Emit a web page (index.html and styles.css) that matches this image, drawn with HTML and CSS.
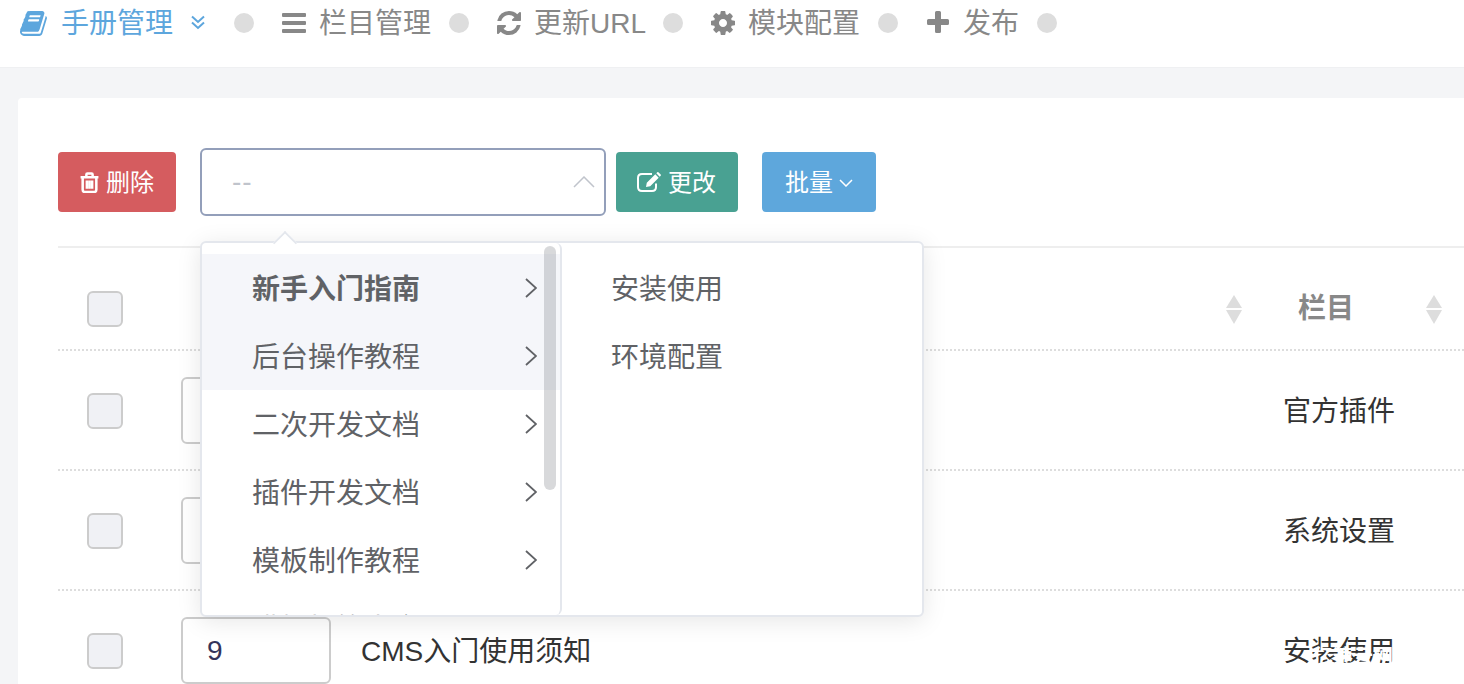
FILE: index.html
```html
<!DOCTYPE html>
<html lang="zh">
<head>
<meta charset="utf-8">
<title>手册管理</title>
<link rel="stylesheet" href="styles.css">
</head>
<body>
<nav class="nav">
  <a class="nav-item active"><svg class="nav-icon book" viewBox="0 0 1792 1792"><path d="M1639 478q40 57 18 129l-275 906q-19 64-76.5 107.5t-122.5 43.5h-923q-77 0-148.5-53.5t-99.5-131.5q-24-67-2-127 0-4 3-27t4-37q1-8-3-21.5t-3-19.5q2-11 8-21t16.5-23.5 16.5-23.5q23-38 45-91.5t30-91.5q3-10 .5-30t-.5-28q3-11 17-28t17-23q21-36 42-92t25-90q1-9-2.5-32t.5-28q4-13 22-30.5t22-22.5q19-26 42.5-84.5t27.5-96.5q1-8-3-25.5t-2-26.5q2-8 9-18t18-23 17-21q8-12 16.5-30.5t15-35 16-36 19.5-32 26.5-23.5 36-11.5 47.5 5.5l-1 3q38-9 51-9h761q74 0 114 56t18 130l-274 906q-36 119-71.5 153.5t-128.5 34.5h-869q-27 0-38 15-11 16-1 43 24 70 144 70h923q29 0 56-15.5t35-41.5l300-987q7-22 5-57 38 15 59 43zm-1064 2q-4 13 2 22.5t20 9.5h608q13 0 25.5-9.5t16.5-22.5l21-64q4-13-2-22.5t-20-9.5h-608q-13 0-25.5 9.5t-16.5 22.5zm-83 256q-4 13 2 22.5t20 9.5h608q13 0 25.5-9.5t16.5-22.5l21-64q4-13-2-22.5t-20-9.5h-608q-13 0-25.5 9.5t-16.5 22.5z"/></svg><span>手册管理</span><svg class="chev-double" viewBox="0 0 16 16"><path d="M2 2.5 8 8l6-5.500M2 8.500 8 14l6-5.500"/></svg></a>
  <i class="dot dot-first"></i>
  <a class="nav-item"><svg class="nav-icon bars" viewBox="0 0 24 20"><rect y="0" width="24" height="4" rx="1"/><rect y="8" width="24" height="4" rx="1"/><rect y="16" width="24" height="4" rx="1"/></svg><span>栏目管理</span></a>
  <i class="dot"></i>
  <a class="nav-item nav-url"><svg class="nav-icon refresh" viewBox="0 0 1792 1792"><path d="M1639 1056q0 5-1 7-64 268-268 434.5t-478 166.5q-146 0-282.5-55t-243.5-157l-129 129q-19 19-45 19t-45-19-19-45v-448q0-26 19-45t45-19h448q26 0 45 19t19 45-19 45l-137 137q71 66 161 102t187 36q134 0 250-65t186-179q11-17 53-117 8-23 30-23h192q13 0 22.5 9.5t9.5 22.5zm25-800v448q0 26-19 45t-45 19h-448q-26 0-45-19t-19-45 19-45l138-138q-148-137-349-137-134 0-250 65t-186 179q-11 17-53 117-8 23-30 23h-199q-13 0-22.5-9.500t-9.500-22.500v-7q65-268 270-434.500t480-166.500q146 0 284 55.500t245 156.500l130-129q19-19 45-19t45 19 19 45z"/></svg><span>更新URL</span></a>
  <i class="dot"></i>
  <a class="nav-item"><svg class="nav-icon cog" viewBox="0 0 1792 1792"><path d="M1152 896q0-106-75-181t-181-75-181 75-75 181 75 181 181 75 181-75 75-181zm512-109v222q0 12-8 23t-20 13l-185 28q-19 54-39 91 35 50 107 138 10 12 10 25t-9 23q-27 37-99 108t-94 71q-12 0-26-9l-138-108q-44 23-91 38-16 136-29 186-7 28-36 28h-222q-14 0-24.500-8.500t-11.500-21.500l-28-184q-49-16-90-37l-141 107q-10 9-25 9-14 0-25-11-126-114-165-168-7-10-7-23 0-12 8-23 15-21 51-66.500t54-70.500q-27-50-41-99l-183-27q-13-2-21-12.500t-8-23.500v-222q0-12 8-23t19-13l186-28q14-46 39-92-40-57-107-138-10-12-10-24 0-10 9-23 26-36 98.500-107.500t94.500-71.500q13 0 26 10l138 107q44-23 91-38 16-136 29-186 7-28 36-28h222q14 0 24.500 8.500t11.500 21.500l28 184q49 16 90 37l142-107q9-9 24-9 13 0 25 10 129 119 165 170 7 8 7 22 0 12-8 23-15 21-51 66.500t-54 70.500q26 50 41 98l183 28q13 2 21 12.500t8 23.500z"/></svg><span>模块配置</span></a>
  <i class="dot"></i>
  <a class="nav-item"><svg class="nav-icon plus" viewBox="0 0 22 22"><path d="M8 1.500a1.500 1.500 0 0 1 1.500-1.500h3a1.500 1.500 0 0 1 1.500 1.500V8h6.500a1.500 1.500 0 0 1 1.500 1.500v3a1.500 1.500 0 0 1-1.500 1.500H14v6.500a1.500 1.500 0 0 1-1.500 1.500h-3A1.500 1.500 0 0 1 8 20.500V14H1.500A1.500 1.500 0 0 1 0 12.500v-3A1.500 1.500 0 0 1 1.500 8H8z"/></svg><span>发布</span></a>
  <i class="dot"></i>
</nav>

<main class="page">
  <section class="card">
    <div class="toolbar">
      <button class="btn btn-del"><svg class="btn-icon trash" viewBox="0 0 20 20"><path class="thin" d="M1.500 5h17M7 4.500V2.500q0-1 1-1h4q1 0 1 1v2M3.500 5v12q0 2 2 2h9q2 0 2-2V5M7.500 8v8M10 8v8M12.500 8v8"/></svg>删除</button>
      <div class="select"><span class="select-value">--</span><svg class="select-arrow" viewBox="0 0 22 12"><path d="M1 11 11 1l10 10"/></svg></div>
      <button class="btn btn-edit"><svg class="btn-icon edit" viewBox="0 0 24 20"><path class="thin" d="M19 11.500V15q0 4-4 4H5q-4 0-4-4V6q0-4 4-4h10"/><path class="solid" d="M9 15l.8-4.200 8.500-8.500 3.400 3.400-8.500 8.500zM19.300 1.300l1-1q.6-.4 1.100 0l2.300 2.300q.4.500 0 1.100l-1 1z"/></svg>更改</button>
      <button class="btn btn-batch">批量<svg class="caret" viewBox="0 0 14 8"><path d="M1 1l6 6 6-6"/></svg></button>
    </div>

    <div class="table">
      <div class="row row-head">
        <div class="cell-check"><span class="check"></span></div>
        <div class="cell-main cell-sort"><span class="sort"></span></div>
        <div class="cell-cat head-cat"><b>栏目</b><span class="sort"></span></div>
      </div>
      <div class="row">
        <div class="cell-check"><span class="check"></span></div>
        <div class="cell-main"><span class="num"></span></div>
        <div class="cell-cat">官方插件</div>
      </div>
      <div class="row">
        <div class="cell-check"><span class="check"></span></div>
        <div class="cell-main"><span class="num"></span></div>
        <div class="cell-cat">系统设置</div>
      </div>
      <div class="row">
        <div class="cell-check"><span class="check"></span></div>
        <div class="cell-main"><span class="num">9</span><span class="title">CMS入门使用须知</span></div>
        <div class="cell-cat">安装使用</div>
      </div>
    </div>

    <div class="dropdown">
      <span class="pop-arrow"></span>
      <ul class="menu menu-left">
        <li class="hover strong">新手入门指南<svg class="next" viewBox="0 0 12 20"><path d="M1 1l10 9-10 9"/></svg></li>
        <li class="hover">后台操作教程<svg class="next" viewBox="0 0 12 20"><path d="M1 1l10 9-10 9"/></svg></li>
        <li>二次开发文档<svg class="next" viewBox="0 0 12 20"><path d="M1 1l10 9-10 9"/></svg></li>
        <li>插件开发文档<svg class="next" viewBox="0 0 12 20"><path d="M1 1l10 9-10 9"/></svg></li>
        <li>模板制作教程<svg class="next" viewBox="0 0 12 20"><path d="M1 1l10 9-10 9"/></svg></li>
        <li>模板标签大全<svg class="next" viewBox="0 0 12 20"><path d="M1 1l10 9-10 9"/></svg></li>
        <span class="scrollbar"></span>
      </ul>
      <ul class="menu menu-right">
        <li>安装使用</li>
        <li>环境配置</li>
      </ul>
    </div>
  </section>
</main>
<span class="watermark">亿速云网</span>
</body>
</html>
```
FILE: styles.css
```css
* { box-sizing: border-box; }
html, body { margin: 0; height: 684px; overflow: hidden; }
body {
  position: relative;
  width: 1464px;
  background: #f4f5f7;
  font-family: "Liberation Sans", "Noto Sans CJK SC", sans-serif;
  font-size: 28px;
  line-height: 40px;
  color: #333;
}
ul { list-style: none; margin: 0; padding: 0; }

.nav {
  display: flex;
  align-items: flex-start;
  height: 68px;
  padding: 3px 0 0 22px;
  background: #fff;
  border-bottom: 1px solid #eff0f2;
  color: #888;
}
.nav-item { display: flex; align-items: center; height: 40px; }
.nav-item span { padding-top: 2px; }
.nav-item.active { color: #5da6dd; }
.nav-url { margin-right: -1px; }
.nav-icon { fill: currentColor; flex: none; }
.book { width: 29px; height: 29px; margin: 0 12px 0 -2px; }
.bars { width: 24px; height: 20px; margin: 0 13px 0 1px; }
.refresh { width: 28px; height: 28px; margin: 0 11px 0 -2px; }
.cog { width: 28px; height: 28px; margin: 0 11px 0 -2px; }
.plus { width: 22px; height: 22px; margin: -2px 14px 0 1px; }
.chev-double { width: 16px; height: 16px; margin: -3px 0 0 17px; fill: none; stroke: currentColor; stroke-width: 2; }
.dot { flex: none; width: 20px; height: 20px; margin: 10px 28px 0 18px; border-radius: 50%; background: #ddd; }
.dot-first { margin-left: 28px; margin-right: 27px; }

.page { padding: 30px 0 0 18px; }
.card {
  position: relative;
  height: 700px;
  padding: 50px 0 0 40px;
  background: #fff;
  border-radius: 4px 0 0 0;
}
.toolbar { display: flex; align-items: center; height: 68px; margin-bottom: 30px; }
.btn {
  display: flex;
  align-items: center;
  justify-content: center;
  height: 60px;
  padding: 2px 0 0;
  border: 0;
  border-radius: 4px;
  color: #fff;
  font: inherit;
  font-size: 24px;
  line-height: 30px;
}
.btn-del { width: 118px; background: #d55c5f; }
.btn-edit { width: 122px; margin-left: 10px; background: #49a192; }
.btn-batch { width: 114px; margin-left: 24px; background: #5ea7dc; }
.btn-icon { width: 20px; height: 20px; margin: -2px 6px 0 0; fill: none; }
.btn-icon.trash { width: 21px; height: 21px; margin-left: -1px; }
.btn-icon.edit { width: 24px; margin-left: -1px; margin-right: 7px; }
.thin { fill: none; stroke: #fff; stroke-width: 2; }
.trash .thin { stroke-width: 2.400; }
.solid { fill: #fff; }
.caret { width: 14px; height: 8px; margin-left: 6px; fill: none; stroke: #fff; stroke-width: 1.500; }

.select {
  display: flex;
  align-items: center;
  justify-content: space-between;
  width: 406px;
  height: 68px;
  margin-left: 24px;
  padding: 0 9px 0 30px;
  border: 2px solid #939fba;
  border-radius: 6px;
  color: #c0c4cc;
  background: #fff;
}
.select-value { letter-spacing: 1px; }
.select-arrow { width: 22px; height: 12px; fill: none; stroke: #c0c4cc; stroke-width: 1.500; }

.table { border-top: 2px solid #eeeeee; }
.row {
  display: grid;
  grid-template-columns: 107px 1105px 1fr;
  height: 120px;
  padding-top: 2px;
  align-items: center;
  border-bottom: 2px dotted #ddd;
}
.row-head { height: 103px; padding-top: 21px; }
.cell-check { padding-left: 29px; display: flex; }
.check {
  width: 36px;
  height: 36px;
  border: 2px solid #ccc;
  border-radius: 6px;
  background: #f0f1f5;
}
.cell-main { display: flex; align-items: center; padding-left: 16px; }
.cell-sort { justify-content: flex-end; padding-right: 28px; }
.cell-cat { padding: 2px 0 0 13px; white-space: nowrap; }
.head-cat { display: flex; align-items: center; padding: 0 0 0 28px; color: #888; }
.head-cat b { font-weight: 700; }
.head-cat .sort { margin-left: 72px; }
.num {
  display: block;
  width: 150px;
  height: 67px;
  margin-top: -2px;
  padding: 12px 0 0 24px;
  border: 2px solid #ccc;
  border-radius: 6px;
  color: #34345a;
  background: #fff;
}
.title { margin-left: 30px; padding-top: 2px; color: #333; }
.sort {
  display: block;
  position: relative;
  width: 16px;
  height: 30px;
}
.sort::before, .sort::after {
  content: "";
  position: absolute;
  left: 0;
  border-left: 8px solid transparent;
  border-right: 8px solid transparent;
}
.sort::before { top: 1px; border-bottom: 13px solid #ddd; }
.sort::after { bottom: 0; border-top: 14px solid #ddd; }

.dropdown {
  position: absolute;
  left: 182px;
  top: 143px;
  display: flex;
  width: 724px;
  height: 376px;
  background: #fff;
  border: 2px solid #e4e7ed;
  border-radius: 6px;
  box-shadow: 0 4px 24px rgba(0, 0, 0, .1);
  color: #606266;
}
.pop-arrow {
  position: absolute;
  left: 74px;
  top: -9px;
  width: 18px;
  height: 18px;
  background: #fff;
  border-left: 2px solid #e4e7ed;
  border-top: 2px solid #e4e7ed;
  transform: rotate(45deg) scale(.95);
}
.menu { position: relative; padding-top: 11px; overflow: hidden; border-radius: 6px; }
.menu-left { width: 360px; border-right: 2px solid #e4e7ed; flex: none; }
.menu-right { flex: 1; }
.menu li {
  display: flex;
  align-items: center;
  height: 68px;
  padding-top: 4px;
  white-space: nowrap;
}
.menu-left li { padding-left: 50px; }
.menu-right li { padding-left: 49px; }
.menu li.hover { background: #f5f6fa; }
.menu li.strong { font-weight: 700; }
.next { width: 12px; height: 20px; margin: -4px 0 0 105px; fill: none; stroke: #606266; stroke-width: 1.800; }
.scrollbar {
  position: absolute;
  top: 3px;
  right: 4px;
  width: 12px;
  height: 244px;
  border-radius: 6px;
  background: rgba(144, 147, 153, .35);
}
.watermark {
  position: absolute;
  left: 1313px;
  top: 645px;
  font-size: 20px;
  font-weight: 700;
  line-height: 24px;
  color: #fff;
}
```
